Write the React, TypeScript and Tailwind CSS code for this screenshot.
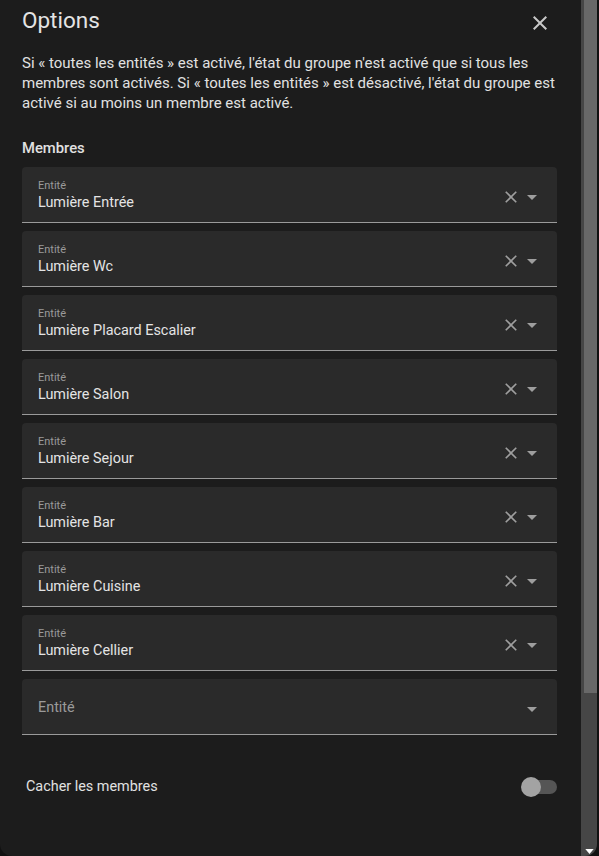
import React from "react";

const members = [
  "Lumière Entrée",
  "Lumière Wc",
  "Lumière Placard Escalier",
  "Lumière Salon",
  "Lumière Sejour",
  "Lumière Bar",
  "Lumière Cuisine",
  "Lumière Cellier",
];

function CloseIcon({ className }: { className?: string }) {
  return (
    <svg viewBox="0 0 24 24" className={className} fill="currentColor">
      <path d="M19,6.41L17.59,5L12,10.59L6.41,5L5,6.41L10.59,12L5,17.59L6.41,19L12,13.41L17.59,19L19,17.59L13.41,12L19,6.41Z" />
    </svg>
  );
}

function MenuDown({ className }: { className?: string }) {
  return (
    <svg viewBox="0 0 24 24" className={className} fill="currentColor">
      <path d="M7,10L12,15L17,10H7Z" />
    </svg>
  );
}

function EntityField({ value }: { value?: string }) {
  return (
    <div className="h-[56px] bg-[#2a2a2a] rounded-t-[4px] border-b border-[#9a9a9a] flex items-center pl-4 pr-[13px]">
      {value ? (
        <div className="flex flex-col pt-[2px]">
          <span className="text-[11px] leading-[14px] text-[#9a9a9a]">Entité</span>
          <span className="text-[14.4px] leading-5 text-[#e4e4e4]">{value}</span>
        </div>
      ) : (
        <span className="text-[14.4px] leading-5 text-[#9a9a9a] mt-[2px]">Entité</span>
      )}
      <div className="ml-auto flex items-center mt-[5px] text-[#9e9e9e]">
        {value && <CloseIcon className="w-5 h-5" />}
        <MenuDown className="w-6 h-6 ml-[-1px]" />
      </div>
    </div>
  );
}

export default function App() {
  return (
    <div className="w-[599px] h-[856px] bg-[#111111] flex overflow-hidden font-['Roboto',sans-serif]">
      <div className="w-[597px] h-full bg-[#1c1c1c] rounded-b-[12px] flex overflow-hidden">
        <div className="flex-1 pl-[22px] pr-[24px]">
          <div className="flex items-start justify-between">
            <h2 className="text-[22.5px] leading-[40px] text-[#e4e4e4]">Options</h2>
            <CloseIcon className="w-6 h-6 mt-[11px] mr-[5px] text-[#c8c8c8]" />
          </div>
          <p className="mt-[13px] text-[15px] leading-5 text-[#e1e1e1]">
            Si « toutes les entités » est activé, l'état du groupe n'est activé que si tous les membres sont activés. Si « toutes les entités » est désactivé, l'état du groupe est activé si au moins un membre est activé.
          </p>
          <div className="mt-[25px] text-[14.8px] leading-5 font-medium text-[#e1e1e1]">Membres</div>
          <div className="mt-[9px] flex flex-col gap-2">
            {members.map((m) => (
              <EntityField key={m} value={m} />
            ))}
            <EntityField />
          </div>
          <div className="mt-[28px] h-[48px] flex items-center justify-between pl-[4px]">
            <span className="text-[14.4px] text-[#e1e1e1]">Cacher les membres</span>
            <div className="relative w-[36px] h-[20px] flex items-center justify-end">
              <div className="w-[32px] h-[14px] rounded-full bg-[#555555]" />
              <div className="absolute left-0 top-0 w-[20px] h-[20px] rounded-full bg-[#a3a3a3]" />
            </div>
          </div>
        </div>
        <div className="w-[16px] h-full bg-[#464646] flex flex-col items-center">
          <div className="w-[13px] ml-[2px] h-[693px] bg-[#686868]" />
          <div className="mt-auto mb-[2px] ml-[1px] text-white">
            <svg viewBox="0 0 10 6" className="w-[9px] h-[5px]" fill="currentColor">
              <path d="M0,0H10L5,6Z" />
            </svg>
          </div>
        </div>
      </div>
    </div>
  );
}
